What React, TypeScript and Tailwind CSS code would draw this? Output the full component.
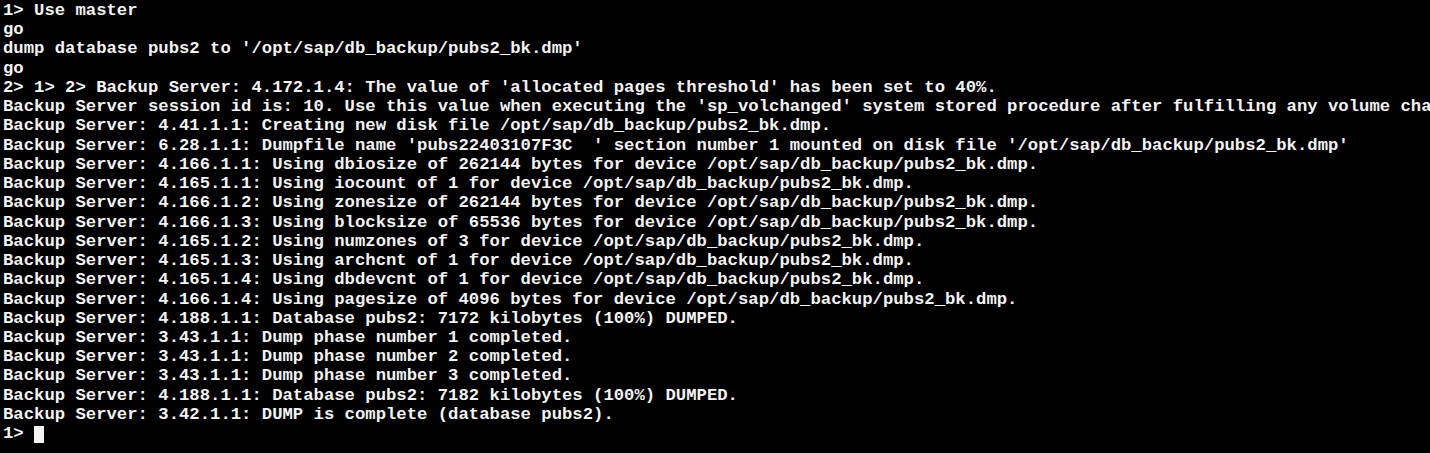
import React from 'react';

const lines: string[] = [
  "1> Use master",
  "go",
  "dump database pubs2 to '/opt/sap/db_backup/pubs2_bk.dmp'",
  "go",
  "2> 1> 2> Backup Server: 4.172.1.4: The value of 'allocated pages threshold' has been set to 40%.",
  "Backup Server session id is: 10. Use this value when executing the 'sp_volchanged' system stored procedure after fulfilling any volume cha",
  "Backup Server: 4.41.1.1: Creating new disk file /opt/sap/db_backup/pubs2_bk.dmp.",
  "Backup Server: 6.28.1.1: Dumpfile name 'pubs22403107F3C  ' section number 1 mounted on disk file '/opt/sap/db_backup/pubs2_bk.dmp'",
  "Backup Server: 4.166.1.1: Using dbiosize of 262144 bytes for device /opt/sap/db_backup/pubs2_bk.dmp.",
  "Backup Server: 4.165.1.1: Using iocount of 1 for device /opt/sap/db_backup/pubs2_bk.dmp.",
  "Backup Server: 4.166.1.2: Using zonesize of 262144 bytes for device /opt/sap/db_backup/pubs2_bk.dmp.",
  "Backup Server: 4.166.1.3: Using blocksize of 65536 bytes for device /opt/sap/db_backup/pubs2_bk.dmp.",
  "Backup Server: 4.165.1.2: Using numzones of 3 for device /opt/sap/db_backup/pubs2_bk.dmp.",
  "Backup Server: 4.165.1.3: Using archcnt of 1 for device /opt/sap/db_backup/pubs2_bk.dmp.",
  "Backup Server: 4.165.1.4: Using dbdevcnt of 1 for device /opt/sap/db_backup/pubs2_bk.dmp.",
  "Backup Server: 4.166.1.4: Using pagesize of 4096 bytes for device /opt/sap/db_backup/pubs2_bk.dmp.",
  "Backup Server: 4.188.1.1: Database pubs2: 7172 kilobytes (100%) DUMPED.",
  "Backup Server: 3.43.1.1: Dump phase number 1 completed.",
  "Backup Server: 3.43.1.1: Dump phase number 2 completed.",
  "Backup Server: 3.43.1.1: Dump phase number 3 completed.",
  "Backup Server: 4.188.1.1: Database pubs2: 7182 kilobytes (100%) DUMPED.",
  "Backup Server: 3.42.1.1: DUMP is complete (database pubs2).",
];

export default function App() {
  return (
    <div className="w-[1430px] h-[453px] overflow-hidden bg-black pl-[3px] pt-[1px] text-[#f4f4f4] font-bold text-[17.25px] leading-[19.23px] font-['Liberation_Mono','Courier_New',monospace]">
      {lines.map((line, i) => (
        <div key={i} className="whitespace-pre">{line}</div>
      ))}
      <div className="flex items-center whitespace-pre">
        <span>1&gt; </span>
        <span className="inline-block w-[10px] h-[17px] bg-[#f4f4f4] translate-y-[1px]" />
      </div>
    </div>
  );
}
